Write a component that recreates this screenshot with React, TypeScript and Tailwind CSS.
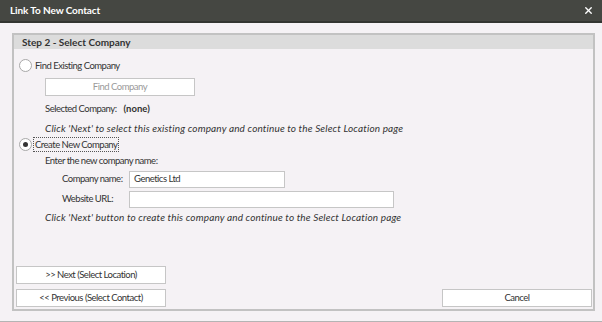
import { X } from "lucide-react";

const font = { fontFamily: "Lato, 'Open Sans', sans-serif" };

function Radio({ checked, label, focused }: { checked?: boolean; label: string; focused?: boolean }) {
  return (
    <div className="ml-[3px] flex h-[14px] items-center">
      <span className="flex h-[13px] w-[13px] shrink-0 items-center justify-center rounded-full border border-[#a8a8a8] bg-white">
        {checked && <span className="h-[5px] w-[5px] rounded-full bg-[#333]" />}
      </span>
      <span
        className={
          "ml-[1px] px-[1px] leading-[13px] text-[#333] " +
          (focused ? "border border-dotted border-[#555]" : "border border-transparent")
        }
      >
        {label}
      </span>
    </div>
  );
}

function Btn({ children, disabled, className = "" }: { children: React.ReactNode; disabled?: boolean; className?: string }) {
  return (
    <div
      className={
        "flex h-[18px] w-[150px] items-center justify-center border border-[#c6c6c6] bg-white " +
        (disabled ? "text-[#9a9a9a] " : "text-[#333] ") +
        className
      }
    >
      {children}
    </div>
  );
}

function Hint({ children }: { children: React.ReactNode }) {
  return <div className="h-[14px] whitespace-nowrap text-[10px] italic tracking-[0.15px]">{children}</div>;
}

export default function App() {
  return (
    <div style={font} className="flex h-[322px] w-[602px] flex-col bg-[#f5f2f5] text-[9.5px] tracking-[-0.5px] text-[#333]">
      <div className="flex h-[23px] shrink-0 items-center justify-between border-b-2 border-[#333531] bg-[#454742] pl-[10px] pr-[8px]">
        <span className="text-[10px] font-bold tracking-[-0.1px] text-white">Link To New Contact</span>
        <X className="h-[11px] w-[11px] text-white" strokeWidth={3} />
      </div>
      <div className="flex flex-1 flex-col pl-[12px] pr-[7px] pt-[10px]">
        <div className="flex h-[278px] flex-col border-2 border-[#c2c2c2]">
          <div className="flex h-[14px] items-center bg-[#dcdcdc] pl-[8px] text-[10px] font-bold tracking-normal text-[#333]">
            Step 2 - Select Company
          </div>
          <div className="flex flex-1 flex-col pl-[2px] pr-[1px] pt-[9px]">
            <Radio label="Find Existing Company" />
            <div className="flex flex-col pl-[29px]">
              <Btn disabled className="mt-[6px]">Find Company</Btn>
              <div className="mt-[6px] flex h-[14px] items-center">
                <span>Selected Company:</span>
                <span className="ml-[7px] font-bold tracking-normal">(none)</span>
              </div>
              <div className="mt-[5px]">
                <Hint>Click 'Next' to select this existing company and continue to the Select Location page</Hint>
              </div>
            </div>
            <div className="mt-[2px]">
              <Radio checked focused label="Create New Company" />
            </div>
            <div className="flex flex-col pl-[29px]">
              <div className="mt-[3px] h-[14px]">Enter the new company name:</div>
              <div className="mt-[3px] flex items-center pl-[17px]">
                <span className="w-[67px] shrink-0 whitespace-nowrap">Company name:</span>
                <div className="flex h-[17px] w-[156px] items-center border border-[#c6c6c6] bg-white px-[4px]">Genetics Ltd</div>
              </div>
              <div className="mt-[3px] flex items-center pl-[17px]">
                <span className="w-[67px] shrink-0 whitespace-nowrap">Website URL:</span>
                <div className="h-[17px] w-[265px] border border-[#c6c6c6] bg-white" />
              </div>
              <div className="mt-[2px]">
                <Hint>Click 'Next' button to create this company and continue to the Select Location page</Hint>
              </div>
            </div>
            <div className="mt-auto flex flex-col gap-[5px] pb-[2px]">
              <Btn>&gt;&gt; Next (Select Location)</Btn>
              <div className="flex justify-between">
                <Btn>&lt;&lt; Previous (Select Contact)</Btn>
                <Btn>Cancel</Btn>
              </div>
            </div>
          </div>
        </div>
      </div>
      <div className="h-px bg-[#b4b4b4]" />
    </div>
  );
}
